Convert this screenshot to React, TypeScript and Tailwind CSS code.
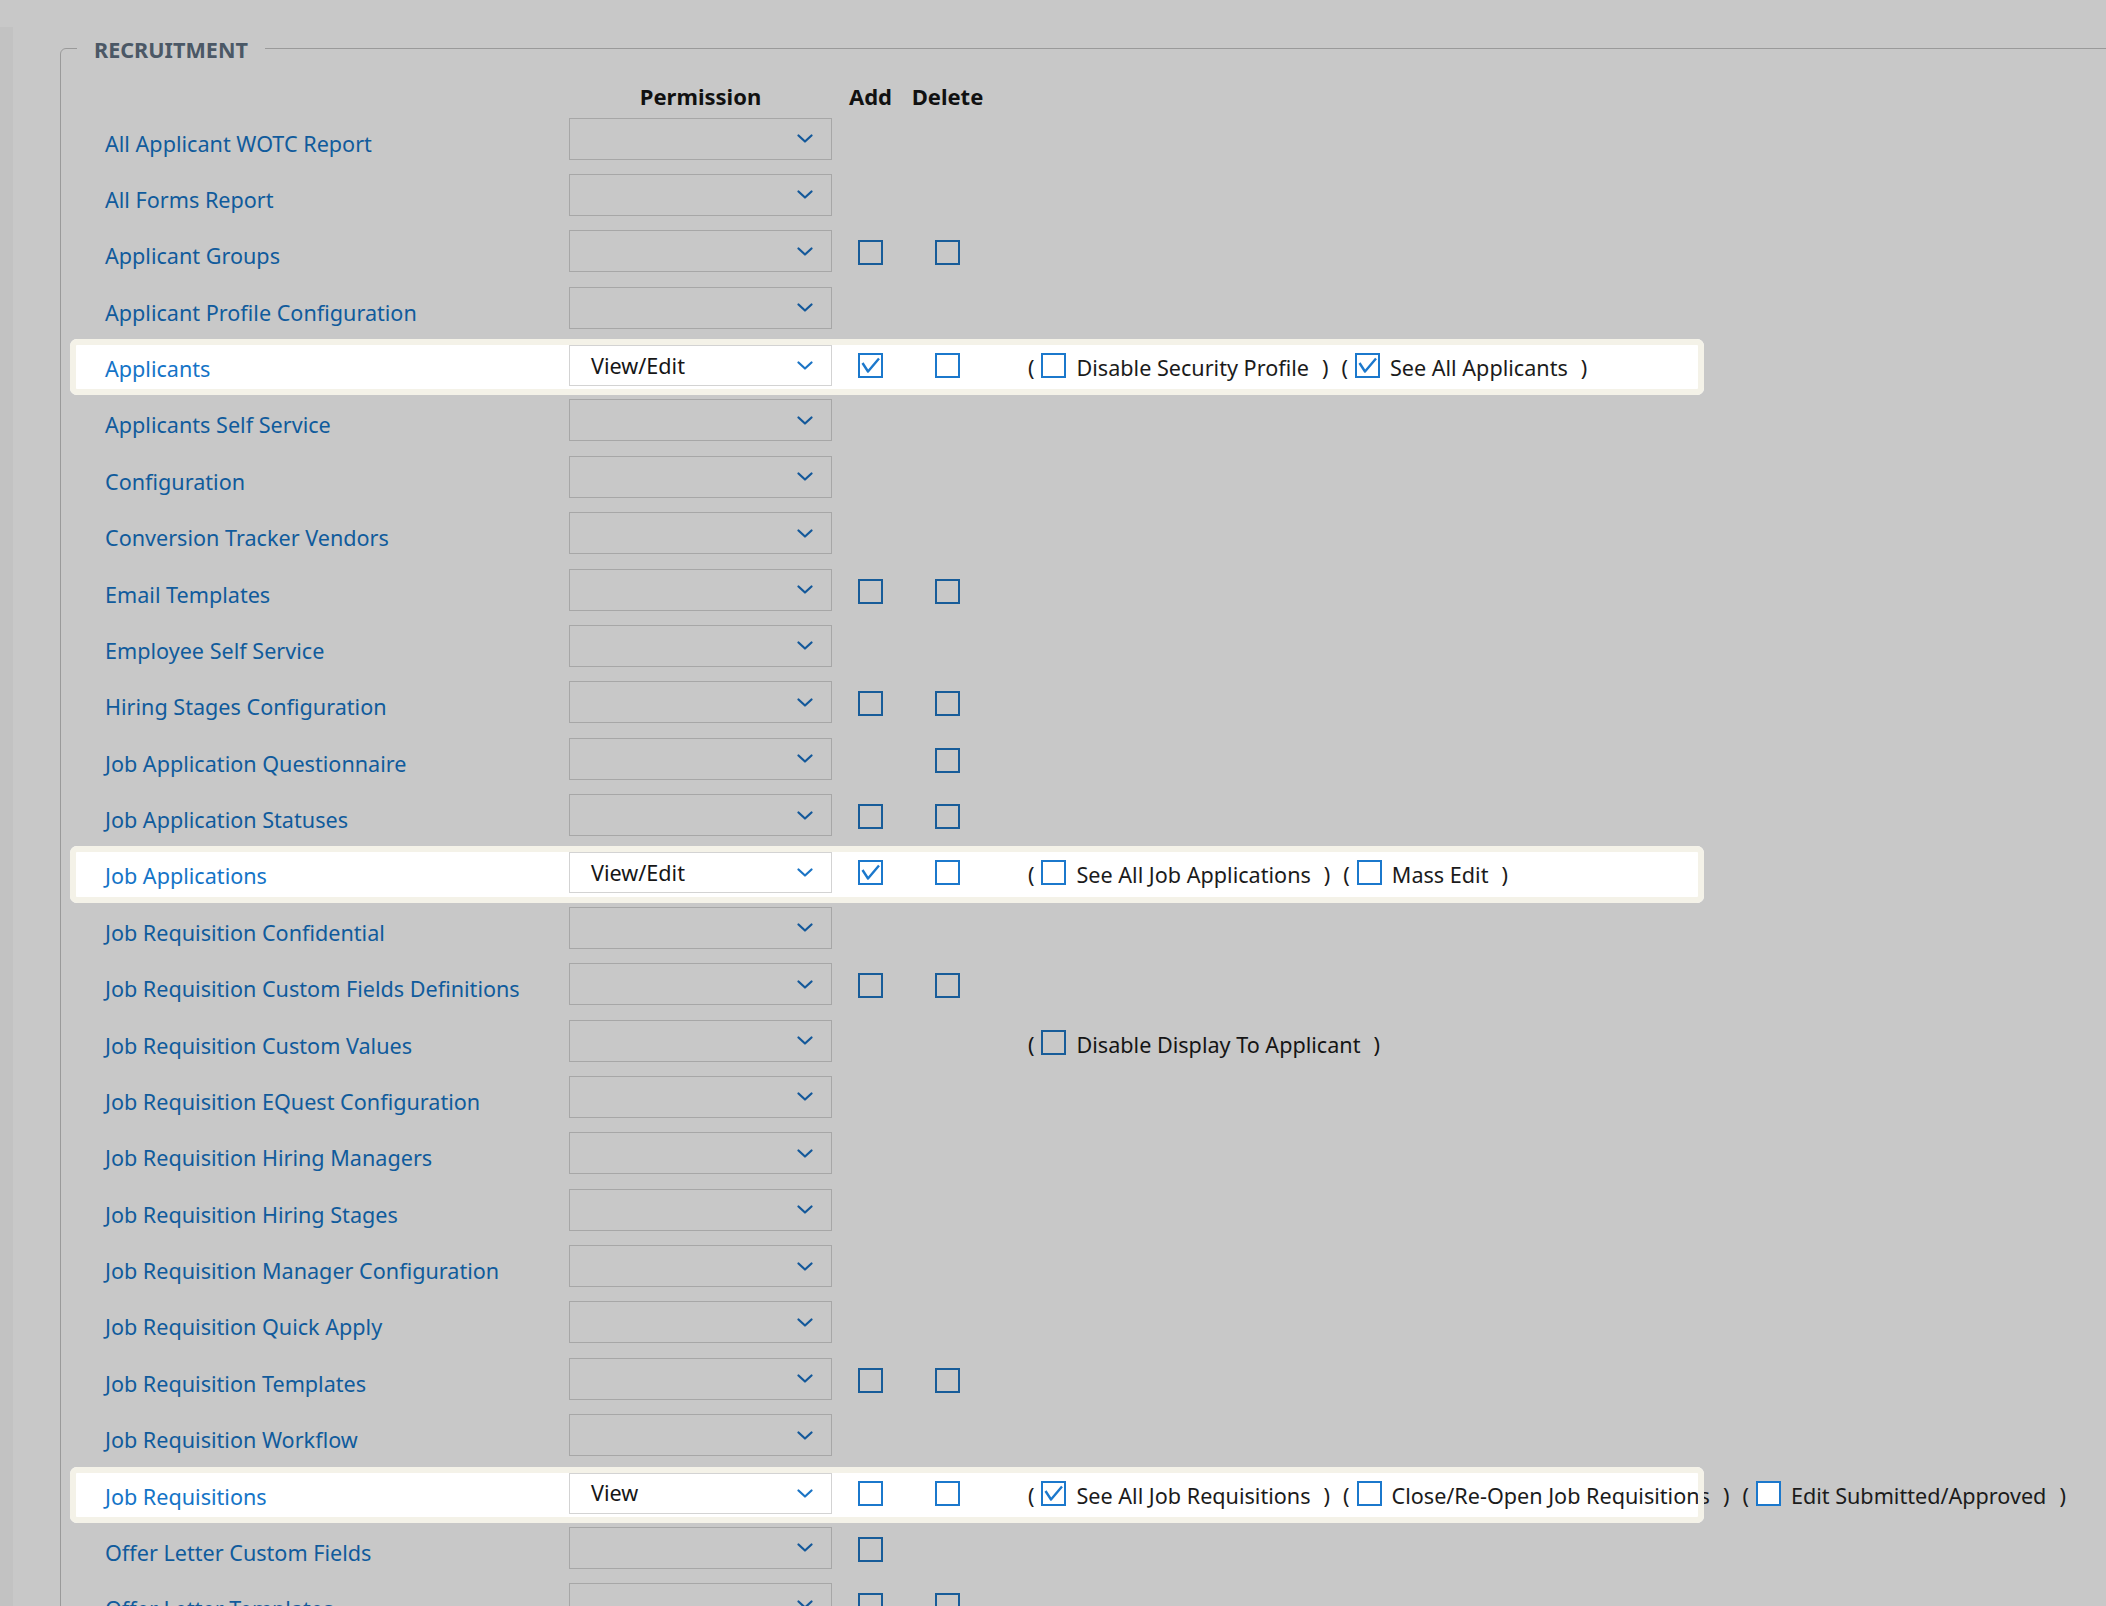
import React from "react";

type Extra = { label: string; checked: boolean };

type Row = {
	name: string;
	value?: string;
	add?: boolean;
	del?: boolean;
	extras?: Extra[];
};

const rows: Row[] = [
	{ name: "All Applicant WOTC Report" },
	{ name: "All Forms Report" },
	{ name: "Applicant Groups", add: false, del: false },
	{ name: "Applicant Profile Configuration" },
	{
		name: "Applicants",
		value: "View/Edit",
		add: true,
		del: false,
		extras: [
			{ label: "Disable Security Profile", checked: false },
			{ label: "See All Applicants", checked: true },
		],
	},
	{ name: "Applicants Self Service" },
	{ name: "Configuration" },
	{ name: "Conversion Tracker Vendors" },
	{ name: "Email Templates", add: false, del: false },
	{ name: "Employee Self Service" },
	{ name: "Hiring Stages Configuration", add: false, del: false },
	{ name: "Job Application Questionnaire", del: false },
	{ name: "Job Application Statuses", add: false, del: false },
	{
		name: "Job Applications",
		value: "View/Edit",
		add: true,
		del: false,
		extras: [
			{ label: "See All Job Applications", checked: false },
			{ label: "Mass Edit", checked: false },
		],
	},
	{ name: "Job Requisition Confidential" },
	{ name: "Job Requisition Custom Fields Definitions", add: false, del: false },
	{
		name: "Job Requisition Custom Values",
		extras: [{ label: "Disable Display To Applicant", checked: false }],
	},
	{ name: "Job Requisition EQuest Configuration" },
	{ name: "Job Requisition Hiring Managers" },
	{ name: "Job Requisition Hiring Stages" },
	{ name: "Job Requisition Manager Configuration" },
	{ name: "Job Requisition Quick Apply" },
	{ name: "Job Requisition Templates", add: false, del: false },
	{ name: "Job Requisition Workflow" },
	{
		name: "Job Requisitions",
		value: "View",
		add: false,
		del: false,
		extras: [
			{ label: "See All Job Requisitions", checked: true },
			{ label: "Close/Re-Open Job Requisitions", checked: false },
			{ label: "Edit Submitted/Approved", checked: false },
		],
	},
	{ name: "Offer Letter Custom Fields", add: false },
	{ name: "Offer Letter Templates", add: false, del: false },
];

const Chevron = ({ on }: { on: boolean }) => (
	<svg
		width="16"
		height="9"
		viewBox="0 0 16 9"
		fill="none"
		className={on ? "text-[#1b74c5]" : "text-[#13589a]"}
	>
		<polyline
			points="1.5,1.5 8,7.5 14.5,1.5"
			stroke="currentColor"
			strokeWidth="2.2"
			strokeLinecap="round"
			strokeLinejoin="round"
		/>
	</svg>
);

const Box = ({ checked, on }: { checked: boolean; on: boolean }) => (
	<span
		className={
			on
				? "flex h-[25px] w-[25px] shrink-0 items-center justify-center border-2 border-[#1b78cc] bg-white"
				: "flex h-[25px] w-[25px] shrink-0 items-center justify-center border-2 border-[#175c99]"
		}
	>
		{checked && (
			<svg width="21" height="21" viewBox="0 0 21 21" fill="none">
				<path
					d="M2.5 8 L8 16.5 L19 3.5"
					stroke={on ? "#1b78cc" : "#175c99"}
					strokeWidth="2.4"
					strokeLinejoin="round"
				/>
			</svg>
		)}
	</span>
);

const Select = ({ value, on }: { value?: string; on: boolean }) => (
	<div
		className={
			on
				? "mt-[6px] flex h-[41px] w-[263px] shrink-0 items-center justify-between border border-[#d3d3d3] bg-white pl-[21px] pr-[18px]"
				: "mt-[4px] flex h-[42px] w-[263px] shrink-0 items-center justify-between border border-[#a7a7a7] pl-[21px] pr-[18px]"
		}
	>
		<span className="text-[21.6px] leading-[30px] text-[#161616]">{value}</span>
		<Chevron on={on} />
	</div>
);

const PermissionRow = ({ row }: { row: Row }) => {
	const on = row.value !== undefined;
	return (
		<div
			className={
				on
					? "relative flex h-[56.38px] w-[1634px] items-start rounded-[7px] bg-white pl-[35px]"
					: "relative flex h-[56.38px] w-[1634px] items-start pl-[35px]"
			}
		>
			<div
				className={
					on
						? "mt-[15px] w-[464px] shrink-0 text-[21.6px] leading-[30px] text-[#1474c7]"
						: "mt-[15px] w-[464px] shrink-0 text-[21.6px] leading-[30px] text-[#105b9c]"
				}
			>
				{row.name}
			</div>
			<Select value={row.value} on={on} />
			<div className="mt-[14px] flex w-[77px] shrink-0 justify-center">
				{row.add !== undefined && <Box checked={row.add} on={on} />}
			</div>
			<div className="mt-[14px] flex w-[77px] shrink-0 justify-center">
				{row.del !== undefined && <Box checked={row.del} on={on} />}
			</div>
			{row.extras && (
				<div
					className={
						on
							? "ml-[42px] mt-[14px] flex shrink-0 items-start whitespace-nowrap text-[21.6px] leading-[30px] text-[#1b1b1b]"
							: "ml-[42px] mt-[14px] flex shrink-0 items-start whitespace-nowrap text-[21.6px] leading-[30px] text-[#151515]"
					}
				>
					{row.extras.map((x, i) => (
						<span key={x.label} className={i === 0 ? "flex items-start" : "ml-[13px] flex items-start"}>
							<span>(</span>
							<span className="ml-[7px]">
								<Box checked={x.checked} on={on} />
							</span>
							<span className="ml-[10px]">{x.label}</span>
							<span className="ml-[13px]">)</span>
						</span>
					))}
				</div>
			)}
			{on && (
				<div className="pointer-events-none absolute inset-0 rounded-[7px] border-[6px] border-[#f4f2e8]" />
			)}
		</div>
	);
};

export default function App() {
	return (
		<div className="h-[1606px] w-[2106px] overflow-hidden bg-[#c8c8c8] pt-[27px] font-['Noto_Sans',sans-serif]">
			<div className="flex h-full items-stretch">
				<div className="w-[13px] shrink-0 bg-[#c2c2c2]" />
				<fieldset className="ml-[47px] mt-[4.5px] w-[2200px] shrink-0 self-start rounded-[6px] border border-[#9a9a9a]">
					<legend className="ml-[16px] px-[17px] pt-[3px] text-[21.6px] font-bold leading-[30px] text-[#4b5866]">
						RECRUITMENT
					</legend>
					<div className="ml-[9px] mt-[16px] flex pl-[35px] text-[22px] font-bold leading-[30px] text-[#111111]">
						<div className="w-[464px] shrink-0" />
						<div className="w-[263px] shrink-0 text-center">Permission</div>
						<div className="w-[77px] shrink-0 text-center">Add</div>
						<div className="w-[77px] shrink-0 text-center">Delete</div>
					</div>
					<div className="ml-[9px] mt-[3px] flex flex-col">
						{rows.map((r) => (
							<PermissionRow key={r.name} row={r} />
						))}
					</div>
				</fieldset>
			</div>
		</div>
	);
}
